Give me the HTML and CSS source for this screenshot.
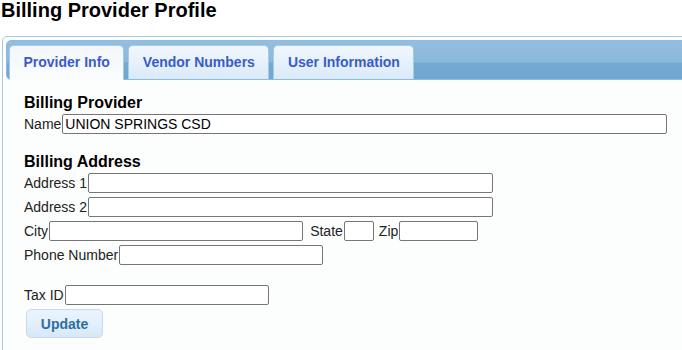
FILE: index.html
```html
<!DOCTYPE html>
<html lang="en">
<head>
    <meta charset="UTF-8">
    <meta name="viewport" content="width=device-width, initial-scale=1.0">
    <title>Billing Provider Profile</title>
    <link rel="stylesheet" href="styles.css">
</head>
<body>
    <h1 class="page-title">Billing Provider Profile</h1>

    <div class="tabs">
        <ul class="tabs-nav">
            <li class="tab active"><a href="#providerInfo">Provider Info</a></li>
            <li class="tab"><a href="#vendorNumbers">Vendor Numbers</a></li>
            <li class="tab"><a href="#userInfo">User Information</a></li>
        </ul>

        <div class="tab-panel" id="providerInfo">
            <form class="profile-form" action="#" method="post">
                <h2 class="section-title">Billing Provider</h2>
                <div class="field-row">
                    <label for="name">Name</label><input type="text" id="name" class="w-name" value="UNION SPRINGS CSD">
                </div>

                <h2 class="section-title section-gap">Billing Address</h2>
                <div class="field-row">
                    <label for="address1">Address 1</label><input type="text" id="address1" class="w-address">
                </div>
                <div class="field-row">
                    <label for="address2">Address 2</label><input type="text" id="address2" class="w-address">
                </div>
                <div class="field-row">
                    <label for="city">City</label><input type="text" id="city" class="w-city">
                    <label for="state" class="inline-label state-label">State</label><input type="text" id="state" class="w-state">
                    <label for="zip" class="inline-label zip-label">Zip</label><input type="text" id="zip" class="w-zip">
                </div>
                <div class="field-row">
                    <label for="phone">Phone Number</label><input type="text" id="phone" class="w-short">
                </div>

                <div class="field-row row-gap">
                    <label for="taxId">Tax ID</label><input type="text" id="taxId" class="w-short">
                </div>

                <button type="submit" class="update-btn">Update</button>
            </form>
        </div>
    </div>
</body>
</html>
```

FILE: styles.css
```css
:root {
    --border-light: #a6c9e2;
    --tab-border: #a9cbe6;
    --tab-text: #3a5bc7;
    --btn-text: #2e6e9e;
    --text: #222222;
    --panel-bg: #fcfdfd;
}

* {
    margin: 0;
    padding: 0;
    box-sizing: border-box;
}

html, body {
    overflow: hidden;
}

body {
    background-color: #ffffff;
    font-family: 'Liberation Sans', Arial, sans-serif;
    color: var(--text);
}

.page-title {
    font-size: 20px;
    line-height: 20px;
    font-weight: bold;
    color: #000000;
    padding-left: 1px;
    margin-bottom: 16px;
}

/* tabs widget */
.tabs {
    margin-left: 2px;
    width: 720px;
    height: 340px;
    padding: 3px;
    border: 1px solid var(--border-light);
    border-radius: 5px;
    background-color: var(--panel-bg);
}

.tabs-nav {
    list-style: none;
    display: flex;
    gap: 4px;
    height: 40px;
    padding: 4px 2px 0;
    border: 1px solid #8fbbdd;
    border-radius: 5px;
    background: linear-gradient(to bottom, #93bedf 0, #8ab7da 55%, #74abd4 58%, #6ea6d1 100%);
}

.tab {
    height: 34px;
    border: 1px solid var(--tab-border);
    border-bottom: none;
    border-radius: 5px 5px 0 0;
    background: linear-gradient(to bottom, #f0f7fd 0, #e6f1fb 50%, #d9eaf8 100%);
}

.tab.active {
    height: 35px;
    background: linear-gradient(to bottom, #f2f7fb 0, #fbfcfd 100%);
}

.tab a {
    display: block;
    padding: 8px 13.5px;
    font-size: 14px;
    line-height: 16px;
    font-weight: bold;
    color: var(--tab-text);
    text-decoration: none;
}

.tab.active a {
    padding-bottom: 9px;
}

.tab-panel {
    padding: 13px 18px;
}

/* form */
.section-title {
    font-size: 16px;
    line-height: 19px;
    font-weight: bold;
    color: #000000;
}

.section-gap {
    margin-top: 18px;
}

.field-row {
    display: flex;
    align-items: center;
    height: 20px;
    margin-top: 4px;
    font-size: 14px;
    line-height: 16px;
}

.section-title + .field-row {
    margin-top: 2px;
}

.row-gap {
    margin-top: 20px;
}

.field-row input {
    height: 20px;
    margin-left: 1px;
    padding: 0 2px;
    border: 1px solid #767676;
    border-radius: 2px;
    background-color: #ffffff;
    font-family: 'Liberation Sans', Arial, sans-serif;
    font-size: 14px;
    color: #000000;
}

.inline-label.state-label {
    margin-left: 7px;
}

.inline-label.zip-label {
    margin-left: 5px;
}

.w-name { width: 605px; }
.w-address { width: 405px; }
.w-city { width: 254px; }
.w-state { width: 30px; }
.w-zip { width: 79px; }
.w-short { width: 204px; }

.update-btn {
    display: block;
    width: 77px;
    height: 29px;
    margin-top: 4px;
    margin-left: 2px;
    border: 1px solid #c5dbec;
    border-radius: 5px;
    background: linear-gradient(to bottom, #eaf4fd 0, #e3effb 50%, #d6e8f7 100%);
    font-family: 'Liberation Sans', Arial, sans-serif;
    font-size: 14px;
    font-weight: bold;
    color: var(--btn-text);
    cursor: pointer;
}
```
